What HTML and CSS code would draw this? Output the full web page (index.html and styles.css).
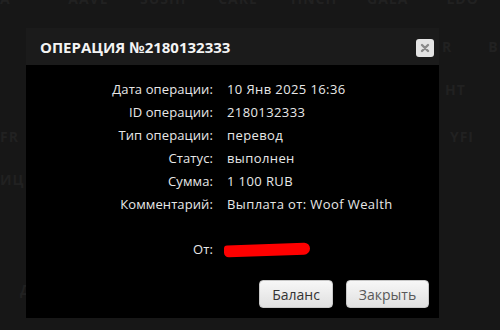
FILE: index.html
```html
<!DOCTYPE html>
<html lang="ru">
<head>
<meta charset="utf-8">
<link rel="stylesheet" href="styles.css">
</head>
<body>
<div class="bg">
  <div class="bg-row r1"><span>A</span><span>AAVE</span><span>SUSHI</span><span>CAKE</span><span>1INCH</span><span>GALA</span><span>LDO</span></div>
  <div class="bg-row r2"><span>R</span><span>BI</span></div>
  <div class="bg-row r3"><span>HT</span></div>
  <div class="bg-row r4"><span>FR</span><span class="push">YFI</span></div>
  <div class="bg-row r5"><span>ИЦ</span></div>
  <div class="bg-row r6"><span>Д</span></div>
</div>

<div class="modal">
  <div class="modal-head">
    <h1 class="modal-title">ОПЕРАЦИЯ №2180132333</h1>
    <button class="close" aria-label="close">
      <svg width="10" height="10" viewBox="0 0 10 10"><path d="M2 2L8 8M8 2L2 8" stroke="#8a8a8a" stroke-width="2.4" stroke-linecap="round"/></svg>
    </button>
  </div>
  <div class="modal-body">
    <dl class="info">
      <dt>Дата операции:</dt><dd>10 Янв 2025 16:36</dd>
      <dt>ID операции:</dt><dd>2180132333</dd>
      <dt>Тип операции:</dt><dd>перевод</dd>
      <dt>Статус:</dt><dd>выполнен</dd>
      <dt>Сумма:</dt><dd>1 100 RUB</dd>
      <dt>Комментарий:</dt><dd>Выплата от: Woof Wealth</dd>
      <dt class="from">От:</dt><dd class="from"><span class="scribble"></span></dd>
    </dl>
    <div class="actions">
      <button class="btn btn-dark">Баланс</button>
      <button class="btn btn-close">Закрыть</button>
    </div>
  </div>
</div>
</body>
</html>
```

FILE: styles.css
```css
html, body {
  margin: 0;
  padding: 0;
  width: 500px;
  height: 330px;
  overflow: hidden;
  background: #171717;
  font-family: "Open Sans", "Liberation Sans", sans-serif;
}

.bg {
  display: flex;
  flex-direction: column;
  color: #212121;
  font-weight: 700;
  font-size: 14px;
  letter-spacing: 1px;
  line-height: 16px;
}
.bg-row { display: flex; height: 16px; }
.r1 { margin-top: -9px; }
.r1 span { width: 82px; text-align: center; }
.r1 span:first-child { width: 12px; text-align: left; }
.r1 span:nth-child(2) { margin-left: 40px; }
.r2 { margin-top: 32px; padding-left: 442px; gap: 36px; }
.r3 { margin-top: 27px; padding-left: 445px; }
.r4 { margin-top: 31px; }
.r4 .push { margin-left: 431px; }
.r5 { margin-top: 27px; }
.r6 { margin-top: 94px; padding-left: 20px; }

.modal {
  position: absolute;
  left: 26px;
  top: 28px;
  width: 413px;
  display: flex;
  flex-direction: column;
}
.modal-head {
  height: 37px;
  background: #1b1b1b;
  display: flex;
  align-items: center;
  justify-content: space-between;
  padding: 0 5px 0 14px;
}
.modal-title {
  margin: 0;
  color: #f4f4f4;
  font-size: 15px;
  font-weight: 700;
  letter-spacing: 0;
  padding-top: 1px;
}
.close {
  width: 18px;
  height: 18px;
  padding: 0;
  margin-top: 2px;
  border: none;
  border-radius: 3px;
  background: #e4e4e4;
  display: flex;
  align-items: center;
  justify-content: center;
}

.modal-body {
  background: #000;
  height: 253px;
  box-sizing: border-box;
  padding: 13px 10px 10px 10px;
  display: flex;
  flex-direction: column;
  justify-content: space-between;
}
.info {
  margin: 0;
  display: grid;
  grid-template-columns: 177px auto;
  column-gap: 14px;
  color: #e8e8e8;
  font-size: 13px;
  letter-spacing: 0.4px;
  line-height: 23px;
}
.info dt { text-align: right; letter-spacing: 0.1px; }
.info dd { margin: 0; }
.info .from { margin-top: 22px; }
.scribble {
  display: inline-block;
  width: 86px;
  height: 12px;
  margin-left: -3px;
  background: #ff0000;
  border-radius: 3px 6px 6px 5px;
  transform: skewY(-2deg);
  vertical-align: -2px;
}

.actions {
  display: flex;
  justify-content: flex-end;
  gap: 13px;
}
.btn {
  height: 28px;
  border: 1px solid #c8c8c8;
  border-radius: 4px;
  background: linear-gradient(#f7f7f7, #e0e0e0);
  font-family: "Open Sans", "Liberation Sans", sans-serif;
  font-size: 14px;
  padding: 0;
}
.btn-dark { width: 74px; color: #333; }
.btn-close { width: 83px; color: #595959; }
```
